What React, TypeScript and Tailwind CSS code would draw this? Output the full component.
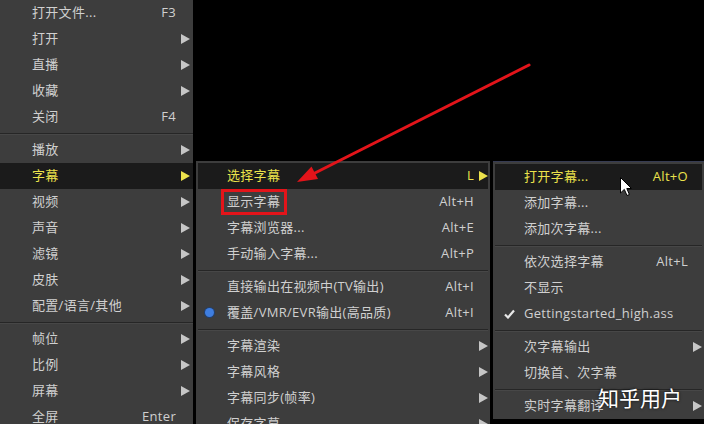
import React from "react";

type Item = {
    label?: string;
    shortcut?: string;
    sub?: boolean;
    hl?: boolean;
    mark?: "radio" | "check";
    sep?: boolean;
    box?: boolean;
};

const mainMenu: Item[] = [
    { label: "打开文件...", shortcut: "F3" },
    { label: "打开", sub: true },
    { label: "直播", sub: true },
    { label: "收藏", sub: true },
    { label: "关闭", shortcut: "F4" },
    { sep: true },
    { label: "播放", sub: true },
    { label: "字幕", sub: true, hl: true },
    { label: "视频", sub: true },
    { label: "声音", sub: true },
    { label: "滤镜", sub: true },
    { label: "皮肤", sub: true },
    { label: "配置/语言/其他", sub: true },
    { sep: true },
    { label: "帧位", sub: true },
    { label: "比例", sub: true },
    { label: "屏幕", sub: true },
    { label: "全屏", shortcut: "Enter" },
];

const subtitleMenu: Item[] = [
    { label: "选择字幕", shortcut: "L", sub: true, hl: true },
    { label: "显示字幕", shortcut: "Alt+H", box: true },
    { label: "字幕浏览器...", shortcut: "Alt+E" },
    { label: "手动输入字幕...", shortcut: "Alt+P" },
    { sep: true },
    { label: "直接输出在视频中(TV输出)", shortcut: "Alt+I" },
    { label: "覆盖/VMR/EVR输出(高品质)", shortcut: "Alt+I", mark: "radio" },
    { sep: true },
    { label: "字幕渲染", sub: true },
    { label: "字幕风格", sub: true },
    { label: "字幕同步(帧率)", sub: true },
    { label: "保存字幕", sub: true },
];

const selectMenu: Item[] = [
    { label: "打开字幕...", shortcut: "Alt+O", hl: true },
    { label: "添加字幕..." },
    { label: "添加次字幕..." },
    { sep: true },
    { label: "依次选择字幕", shortcut: "Alt+L" },
    { label: "不显示" },
    { label: "Gettingstarted_high.ass", mark: "check" },
    { sep: true },
    { label: "次字幕输出", sub: true },
    { label: "切换首、次字幕" },
    { sep: true },
    { label: "实时字幕翻译", sub: true },
];

function Tri() {
    return (
        <svg width="9" height="10" viewBox="0 0 9 10">
            <path d="M0 0 L9 5 L0 10 Z" fill="currentColor" />
        </svg>
    );
}

function Menu({ items, first }: { items: Item[]; first?: boolean }) {
    return (
        <div className={`flex flex-col bg-[#3d3d3d] ${first ? "" : "px-[2px] pt-[2px]"}`}>
            {items.map((it, i) =>
                it.sep ? (
                    <div key={i} className="flex h-[7px] flex-col justify-center">
                        <div className="h-px bg-[#262626]" />
                        <div className="h-px bg-[#474747]" />
                    </div>
                ) : (
                    <div
                        key={i}
                        className={`relative flex h-[26px] items-center whitespace-nowrap ${first ? "pl-[32px]" : "pl-[29px]"} ${
                            it.hl ? "bg-[#1b1b1b] text-[#ece24c]" : "text-[#d0d0d0]"
                        }`}
                    >
                        {it.mark === "radio" && (
                            <span className="absolute left-[7px] top-[8px] size-[9px] rounded-full bg-[#3f7ee0] ring-1 ring-[#22406e]" />
                        )}
                        {it.mark === "check" && (
                            <svg className="absolute left-[9px] top-[8px]" width="11" height="10" viewBox="0 0 11 10">
                                <path d="M1 5.5 L4 8.5 L10 1.5" stroke="#e8e8e8" strokeWidth="2.2" fill="none" />
                            </svg>
                        )}
                        {it.box && (
                            <span className="absolute left-[23px] top-0 h-[26px] w-[66px] border-[3px] border-[#e3141a]" />
                        )}
                        <span className="flex-1">{it.label}</span>
                        {it.shortcut && <span>{it.shortcut}</span>}
                        <span className={`flex pl-[5px] ${first ? "w-[17px]" : "w-[14px]"} ${it.hl ? "" : "text-[#c6c6c6]"}`}>
                            {it.sub && <Tri />}
                        </span>
                    </div>
                )
            )}
        </div>
    );
}

export default function App() {
    return (
        <div className="relative h-[424px] w-[704px] overflow-hidden bg-black font-[Open_Sans,Noto_Sans_CJK_SC,sans-serif] text-[13px] tracking-[0.3px]">
            <div className="flex gap-[3px]">
                <div className="w-[193px] shrink-0">
                    <Menu items={mainMenu} first />
                </div>
                <div className="flex flex-1 gap-[3px] pt-[161px]">
                    <div className="w-[294px] shrink-0">
                        <Menu items={subtitleMenu} />
                    </div>
                    <div className="flex-1 border-t border-[#363b52]">
                        <Menu items={selectMenu} />
                    </div>
                </div>
            </div>

            {/* annotation arrow */}
            <svg className="pointer-events-none absolute left-0 top-0" width="704" height="424">
                <line x1="529" y1="65" x2="312" y2="174.5" stroke="#e3141a" strokeWidth="3" strokeLinecap="round" />
                <path d="M297 182 L318 179 L311.5 166.5 Z" fill="#e3141a" />
            </svg>

            {/* mouse cursor */}
            <svg className="pointer-events-none absolute left-[620px] top-[177px]" width="13" height="20" viewBox="0 0 13 20">
                <path d="M0.5 0.5 L0.5 16 L4.3 12.4 L7 18.5 L9.4 17.5 L6.8 11.5 L11.5 11.5 Z" fill="#ffffff" stroke="#000000" strokeWidth="1" />
            </svg>

            <div className="pointer-events-none absolute left-[598px] top-[383px] font-[Noto_Sans_CJK_SC,sans-serif] text-[21px] leading-[28px] tracking-normal text-white [text-shadow:0_0_3px_rgba(0,0,0,0.8)]">
                知乎用户
            </div>
        </div>
    );
}
